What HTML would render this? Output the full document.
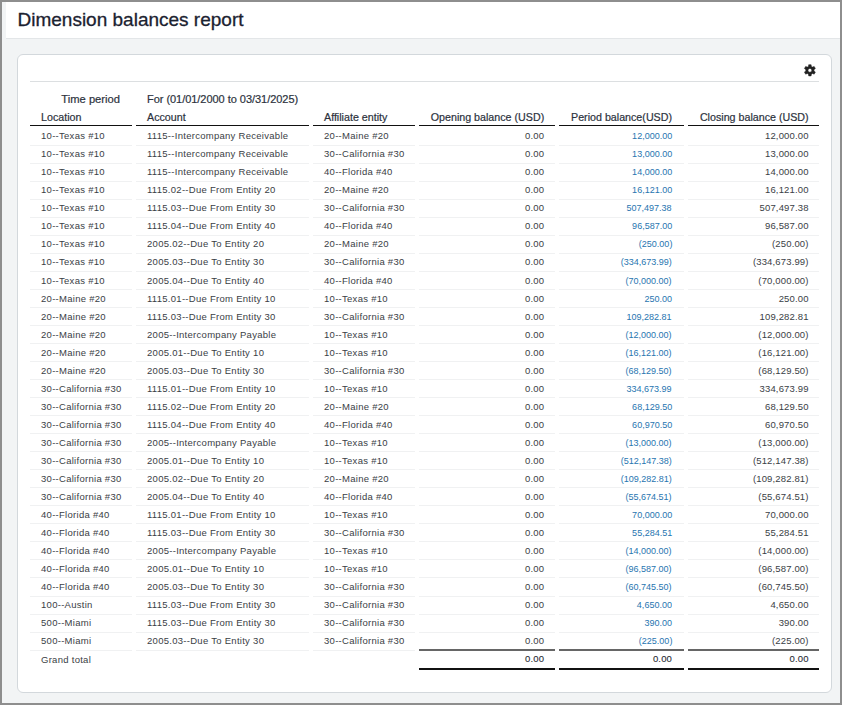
<!DOCTYPE html>
<html><head><meta charset="utf-8"><style>
*{margin:0;padding:0;box-sizing:border-box}
html,body{width:842px;height:705px;overflow:hidden}
body{background:#8e8e8e;font-family:"Liberation Sans",sans-serif;position:relative}
#frame{position:absolute;left:2px;top:2px;width:838px;height:701px;background:#f2f4f5}
#hdr{position:absolute;left:6px;top:2px;width:834px;height:37px;background:#fff;border-bottom:1px solid #e3e6e8}
#title{position:absolute;left:17.5px;top:8.5px;-webkit-text-stroke:0.3px #1b2230;font-size:19px;color:#1b2230;white-space:nowrap;line-height:22px}
#card{position:absolute;left:17px;top:54px;width:815px;height:639px;background:#fff;border:1px solid #d3d8dc;border-radius:6px}
.a{position:absolute;white-space:nowrap;line-height:12px}
.t{font-size:9.5px;color:#3a3e45;letter-spacing:0.28px}
.n{font-size:9.5px;color:#3a3e45;text-align:right;letter-spacing:0.15px;transform-origin:100% 50%}
.tot{transform:none;color:#2a2e35;-webkit-text-stroke:0.1px #2a2e35}
.b{color:#2775b0;letter-spacing:0;transform:scaleX(0.95)}
.h{font-size:10.7px;color:#2c323d;-webkit-text-stroke:0.2px #2c323d}
.ln{position:absolute;height:1px;background:#f0f1f2}
.hl{position:absolute;height:1px;background:#111}
</style></head><body>
<div id="frame"></div>
<div id="hdr"></div>
<div id="title">Dimension balances report</div>
<div id="card"></div>

<div class="ln" style="left:30px;top:81px;width:789px;background:#dcdfe1"></div>
<svg style="position:absolute;left:803px;top:63px" width="14" height="14" viewBox="0 0 14 14"><path fill="#222" stroke="#222" stroke-width="0.5" stroke-linejoin="round" fill-rule="evenodd" d="M5.43 3.47 L5.70 1.68 L8.10 1.68 L8.37 3.47 L9.48 4.11 L11.17 3.45 L12.37 5.52 L10.95 6.66 L10.95 7.94 L12.37 9.08 L11.17 11.15 L9.48 10.49 L8.37 11.13 L8.10 12.92 L5.70 12.92 L5.43 11.13 L4.32 10.49 L2.63 11.15 L1.43 9.08 L2.85 7.94 L2.85 6.66 L1.43 5.52 L2.63 3.45 L4.32 4.11Z M6.9 5.4 A1.9 1.9 0 1 0 6.9 9.2 A1.9 1.9 0 1 0 6.9 5.4Z"/></svg>
<div class="a h"  style="font-size:11.2px;right:722px;top:92.92px">Time period</div>
<div class="a h" style="font-size:11px;letter-spacing:-0.04px;left:147px;top:92.92px">For (01/01/2000 to 03/31/2025)</div>
<div class="a h" style="left:41px;top:110.79px">Location</div>
<div class="a h" style="left:147px;top:110.79px">Account</div>
<div class="a h" style="left:324px;top:110.79px">Affiliate entity</div>
<div class="a h" style="right:297.79999999999995px;top:110.79px">Opening balance (USD)</div>
<div class="a h" style="right:170px;top:110.79px">Period balance(USD)</div>
<div class="a h" style="right:33.39999999999998px;top:110.79px">Closing balance (USD)</div>
<div class="hl" style="left:30px;top:125px;width:102px"></div>
<div class="hl" style="left:136px;top:125px;width:173px"></div>
<div class="hl" style="left:313px;top:125px;width:102px"></div>
<div class="hl" style="left:419px;top:125px;width:136px"></div>
<div class="hl" style="left:559px;top:125px;width:125px"></div>
<div class="hl" style="left:688px;top:125px;width:131px"></div>
<div class="a t" style="left:41px;top:130.21px">10--Texas #10</div>
<div class="a t" style="left:147px;top:130.21px">1115--Intercompany Receivable</div>
<div class="a t" style="left:324px;top:130.21px">20--Maine #20</div>
<div class="a n" style="right:297.79999999999995px;top:130.21px">0.00</div>
<div class="a n b" style="right:170px;top:130.21px">12,000.00</div>
<div class="a n" style="right:33.39999999999998px;top:130.21px">12,000.00</div>
<div class="ln" style="left:30px;top:144.50px;width:102px"></div>
<div class="ln" style="left:136px;top:144.50px;width:173px"></div>
<div class="ln" style="left:313px;top:144.50px;width:102px"></div>
<div class="ln" style="left:419px;top:144.50px;width:136px"></div>
<div class="ln" style="left:559px;top:144.50px;width:125px"></div>
<div class="ln" style="left:688px;top:144.50px;width:131px"></div>
<div class="a t" style="left:41px;top:148.25px">10--Texas #10</div>
<div class="a t" style="left:147px;top:148.25px">1115--Intercompany Receivable</div>
<div class="a t" style="left:324px;top:148.25px">30--California #30</div>
<div class="a n" style="right:297.79999999999995px;top:148.25px">0.00</div>
<div class="a n b" style="right:170px;top:148.25px">13,000.00</div>
<div class="a n" style="right:33.39999999999998px;top:148.25px">13,000.00</div>
<div class="ln" style="left:30px;top:162.54px;width:102px"></div>
<div class="ln" style="left:136px;top:162.54px;width:173px"></div>
<div class="ln" style="left:313px;top:162.54px;width:102px"></div>
<div class="ln" style="left:419px;top:162.54px;width:136px"></div>
<div class="ln" style="left:559px;top:162.54px;width:125px"></div>
<div class="ln" style="left:688px;top:162.54px;width:131px"></div>
<div class="a t" style="left:41px;top:166.29px">10--Texas #10</div>
<div class="a t" style="left:147px;top:166.29px">1115--Intercompany Receivable</div>
<div class="a t" style="left:324px;top:166.29px">40--Florida #40</div>
<div class="a n" style="right:297.79999999999995px;top:166.29px">0.00</div>
<div class="a n b" style="right:170px;top:166.29px">14,000.00</div>
<div class="a n" style="right:33.39999999999998px;top:166.29px">14,000.00</div>
<div class="ln" style="left:30px;top:180.58px;width:102px"></div>
<div class="ln" style="left:136px;top:180.58px;width:173px"></div>
<div class="ln" style="left:313px;top:180.58px;width:102px"></div>
<div class="ln" style="left:419px;top:180.58px;width:136px"></div>
<div class="ln" style="left:559px;top:180.58px;width:125px"></div>
<div class="ln" style="left:688px;top:180.58px;width:131px"></div>
<div class="a t" style="left:41px;top:184.33px">10--Texas #10</div>
<div class="a t" style="left:147px;top:184.33px">1115.02--Due From Entity 20</div>
<div class="a t" style="left:324px;top:184.33px">20--Maine #20</div>
<div class="a n" style="right:297.79999999999995px;top:184.33px">0.00</div>
<div class="a n b" style="right:170px;top:184.33px">16,121.00</div>
<div class="a n" style="right:33.39999999999998px;top:184.33px">16,121.00</div>
<div class="ln" style="left:30px;top:198.62px;width:102px"></div>
<div class="ln" style="left:136px;top:198.62px;width:173px"></div>
<div class="ln" style="left:313px;top:198.62px;width:102px"></div>
<div class="ln" style="left:419px;top:198.62px;width:136px"></div>
<div class="ln" style="left:559px;top:198.62px;width:125px"></div>
<div class="ln" style="left:688px;top:198.62px;width:131px"></div>
<div class="a t" style="left:41px;top:202.37px">10--Texas #10</div>
<div class="a t" style="left:147px;top:202.37px">1115.03--Due From Entity 30</div>
<div class="a t" style="left:324px;top:202.37px">30--California #30</div>
<div class="a n" style="right:297.79999999999995px;top:202.37px">0.00</div>
<div class="a n b" style="right:170px;top:202.37px">507,497.38</div>
<div class="a n" style="right:33.39999999999998px;top:202.37px">507,497.38</div>
<div class="ln" style="left:30px;top:216.66px;width:102px"></div>
<div class="ln" style="left:136px;top:216.66px;width:173px"></div>
<div class="ln" style="left:313px;top:216.66px;width:102px"></div>
<div class="ln" style="left:419px;top:216.66px;width:136px"></div>
<div class="ln" style="left:559px;top:216.66px;width:125px"></div>
<div class="ln" style="left:688px;top:216.66px;width:131px"></div>
<div class="a t" style="left:41px;top:220.41px">10--Texas #10</div>
<div class="a t" style="left:147px;top:220.41px">1115.04--Due From Entity 40</div>
<div class="a t" style="left:324px;top:220.41px">40--Florida #40</div>
<div class="a n" style="right:297.79999999999995px;top:220.41px">0.00</div>
<div class="a n b" style="right:170px;top:220.41px">96,587.00</div>
<div class="a n" style="right:33.39999999999998px;top:220.41px">96,587.00</div>
<div class="ln" style="left:30px;top:234.70px;width:102px"></div>
<div class="ln" style="left:136px;top:234.70px;width:173px"></div>
<div class="ln" style="left:313px;top:234.70px;width:102px"></div>
<div class="ln" style="left:419px;top:234.70px;width:136px"></div>
<div class="ln" style="left:559px;top:234.70px;width:125px"></div>
<div class="ln" style="left:688px;top:234.70px;width:131px"></div>
<div class="a t" style="left:41px;top:238.45px">10--Texas #10</div>
<div class="a t" style="left:147px;top:238.45px">2005.02--Due To Entity 20</div>
<div class="a t" style="left:324px;top:238.45px">20--Maine #20</div>
<div class="a n" style="right:297.79999999999995px;top:238.45px">0.00</div>
<div class="a n b" style="right:170px;top:238.45px">(250.00)</div>
<div class="a n" style="right:33.39999999999998px;top:238.45px">(250.00)</div>
<div class="ln" style="left:30px;top:252.74px;width:102px"></div>
<div class="ln" style="left:136px;top:252.74px;width:173px"></div>
<div class="ln" style="left:313px;top:252.74px;width:102px"></div>
<div class="ln" style="left:419px;top:252.74px;width:136px"></div>
<div class="ln" style="left:559px;top:252.74px;width:125px"></div>
<div class="ln" style="left:688px;top:252.74px;width:131px"></div>
<div class="a t" style="left:41px;top:256.49px">10--Texas #10</div>
<div class="a t" style="left:147px;top:256.49px">2005.03--Due To Entity 30</div>
<div class="a t" style="left:324px;top:256.49px">30--California #30</div>
<div class="a n" style="right:297.79999999999995px;top:256.49px">0.00</div>
<div class="a n b" style="right:170px;top:256.49px">(334,673.99)</div>
<div class="a n" style="right:33.39999999999998px;top:256.49px">(334,673.99)</div>
<div class="ln" style="left:30px;top:270.78px;width:102px"></div>
<div class="ln" style="left:136px;top:270.78px;width:173px"></div>
<div class="ln" style="left:313px;top:270.78px;width:102px"></div>
<div class="ln" style="left:419px;top:270.78px;width:136px"></div>
<div class="ln" style="left:559px;top:270.78px;width:125px"></div>
<div class="ln" style="left:688px;top:270.78px;width:131px"></div>
<div class="a t" style="left:41px;top:274.53px">10--Texas #10</div>
<div class="a t" style="left:147px;top:274.53px">2005.04--Due To Entity 40</div>
<div class="a t" style="left:324px;top:274.53px">40--Florida #40</div>
<div class="a n" style="right:297.79999999999995px;top:274.53px">0.00</div>
<div class="a n b" style="right:170px;top:274.53px">(70,000.00)</div>
<div class="a n" style="right:33.39999999999998px;top:274.53px">(70,000.00)</div>
<div class="ln" style="left:30px;top:288.82px;width:102px"></div>
<div class="ln" style="left:136px;top:288.82px;width:173px"></div>
<div class="ln" style="left:313px;top:288.82px;width:102px"></div>
<div class="ln" style="left:419px;top:288.82px;width:136px"></div>
<div class="ln" style="left:559px;top:288.82px;width:125px"></div>
<div class="ln" style="left:688px;top:288.82px;width:131px"></div>
<div class="a t" style="left:41px;top:292.57px">20--Maine #20</div>
<div class="a t" style="left:147px;top:292.57px">1115.01--Due From Entity 10</div>
<div class="a t" style="left:324px;top:292.57px">10--Texas #10</div>
<div class="a n" style="right:297.79999999999995px;top:292.57px">0.00</div>
<div class="a n b" style="right:170px;top:292.57px">250.00</div>
<div class="a n" style="right:33.39999999999998px;top:292.57px">250.00</div>
<div class="ln" style="left:30px;top:306.86px;width:102px"></div>
<div class="ln" style="left:136px;top:306.86px;width:173px"></div>
<div class="ln" style="left:313px;top:306.86px;width:102px"></div>
<div class="ln" style="left:419px;top:306.86px;width:136px"></div>
<div class="ln" style="left:559px;top:306.86px;width:125px"></div>
<div class="ln" style="left:688px;top:306.86px;width:131px"></div>
<div class="a t" style="left:41px;top:310.61px">20--Maine #20</div>
<div class="a t" style="left:147px;top:310.61px">1115.03--Due From Entity 30</div>
<div class="a t" style="left:324px;top:310.61px">30--California #30</div>
<div class="a n" style="right:297.79999999999995px;top:310.61px">0.00</div>
<div class="a n b" style="right:170px;top:310.61px">109,282.81</div>
<div class="a n" style="right:33.39999999999998px;top:310.61px">109,282.81</div>
<div class="ln" style="left:30px;top:324.90px;width:102px"></div>
<div class="ln" style="left:136px;top:324.90px;width:173px"></div>
<div class="ln" style="left:313px;top:324.90px;width:102px"></div>
<div class="ln" style="left:419px;top:324.90px;width:136px"></div>
<div class="ln" style="left:559px;top:324.90px;width:125px"></div>
<div class="ln" style="left:688px;top:324.90px;width:131px"></div>
<div class="a t" style="left:41px;top:328.65px">20--Maine #20</div>
<div class="a t" style="left:147px;top:328.65px">2005--Intercompany Payable</div>
<div class="a t" style="left:324px;top:328.65px">10--Texas #10</div>
<div class="a n" style="right:297.79999999999995px;top:328.65px">0.00</div>
<div class="a n b" style="right:170px;top:328.65px">(12,000.00)</div>
<div class="a n" style="right:33.39999999999998px;top:328.65px">(12,000.00)</div>
<div class="ln" style="left:30px;top:342.94px;width:102px"></div>
<div class="ln" style="left:136px;top:342.94px;width:173px"></div>
<div class="ln" style="left:313px;top:342.94px;width:102px"></div>
<div class="ln" style="left:419px;top:342.94px;width:136px"></div>
<div class="ln" style="left:559px;top:342.94px;width:125px"></div>
<div class="ln" style="left:688px;top:342.94px;width:131px"></div>
<div class="a t" style="left:41px;top:346.69px">20--Maine #20</div>
<div class="a t" style="left:147px;top:346.69px">2005.01--Due To Entity 10</div>
<div class="a t" style="left:324px;top:346.69px">10--Texas #10</div>
<div class="a n" style="right:297.79999999999995px;top:346.69px">0.00</div>
<div class="a n b" style="right:170px;top:346.69px">(16,121.00)</div>
<div class="a n" style="right:33.39999999999998px;top:346.69px">(16,121.00)</div>
<div class="ln" style="left:30px;top:360.98px;width:102px"></div>
<div class="ln" style="left:136px;top:360.98px;width:173px"></div>
<div class="ln" style="left:313px;top:360.98px;width:102px"></div>
<div class="ln" style="left:419px;top:360.98px;width:136px"></div>
<div class="ln" style="left:559px;top:360.98px;width:125px"></div>
<div class="ln" style="left:688px;top:360.98px;width:131px"></div>
<div class="a t" style="left:41px;top:364.73px">20--Maine #20</div>
<div class="a t" style="left:147px;top:364.73px">2005.03--Due To Entity 30</div>
<div class="a t" style="left:324px;top:364.73px">30--California #30</div>
<div class="a n" style="right:297.79999999999995px;top:364.73px">0.00</div>
<div class="a n b" style="right:170px;top:364.73px">(68,129.50)</div>
<div class="a n" style="right:33.39999999999998px;top:364.73px">(68,129.50)</div>
<div class="ln" style="left:30px;top:379.02px;width:102px"></div>
<div class="ln" style="left:136px;top:379.02px;width:173px"></div>
<div class="ln" style="left:313px;top:379.02px;width:102px"></div>
<div class="ln" style="left:419px;top:379.02px;width:136px"></div>
<div class="ln" style="left:559px;top:379.02px;width:125px"></div>
<div class="ln" style="left:688px;top:379.02px;width:131px"></div>
<div class="a t" style="left:41px;top:382.77px">30--California #30</div>
<div class="a t" style="left:147px;top:382.77px">1115.01--Due From Entity 10</div>
<div class="a t" style="left:324px;top:382.77px">10--Texas #10</div>
<div class="a n" style="right:297.79999999999995px;top:382.77px">0.00</div>
<div class="a n b" style="right:170px;top:382.77px">334,673.99</div>
<div class="a n" style="right:33.39999999999998px;top:382.77px">334,673.99</div>
<div class="ln" style="left:30px;top:397.06px;width:102px"></div>
<div class="ln" style="left:136px;top:397.06px;width:173px"></div>
<div class="ln" style="left:313px;top:397.06px;width:102px"></div>
<div class="ln" style="left:419px;top:397.06px;width:136px"></div>
<div class="ln" style="left:559px;top:397.06px;width:125px"></div>
<div class="ln" style="left:688px;top:397.06px;width:131px"></div>
<div class="a t" style="left:41px;top:400.81px">30--California #30</div>
<div class="a t" style="left:147px;top:400.81px">1115.02--Due From Entity 20</div>
<div class="a t" style="left:324px;top:400.81px">20--Maine #20</div>
<div class="a n" style="right:297.79999999999995px;top:400.81px">0.00</div>
<div class="a n b" style="right:170px;top:400.81px">68,129.50</div>
<div class="a n" style="right:33.39999999999998px;top:400.81px">68,129.50</div>
<div class="ln" style="left:30px;top:415.10px;width:102px"></div>
<div class="ln" style="left:136px;top:415.10px;width:173px"></div>
<div class="ln" style="left:313px;top:415.10px;width:102px"></div>
<div class="ln" style="left:419px;top:415.10px;width:136px"></div>
<div class="ln" style="left:559px;top:415.10px;width:125px"></div>
<div class="ln" style="left:688px;top:415.10px;width:131px"></div>
<div class="a t" style="left:41px;top:418.85px">30--California #30</div>
<div class="a t" style="left:147px;top:418.85px">1115.04--Due From Entity 40</div>
<div class="a t" style="left:324px;top:418.85px">40--Florida #40</div>
<div class="a n" style="right:297.79999999999995px;top:418.85px">0.00</div>
<div class="a n b" style="right:170px;top:418.85px">60,970.50</div>
<div class="a n" style="right:33.39999999999998px;top:418.85px">60,970.50</div>
<div class="ln" style="left:30px;top:433.14px;width:102px"></div>
<div class="ln" style="left:136px;top:433.14px;width:173px"></div>
<div class="ln" style="left:313px;top:433.14px;width:102px"></div>
<div class="ln" style="left:419px;top:433.14px;width:136px"></div>
<div class="ln" style="left:559px;top:433.14px;width:125px"></div>
<div class="ln" style="left:688px;top:433.14px;width:131px"></div>
<div class="a t" style="left:41px;top:436.89px">30--California #30</div>
<div class="a t" style="left:147px;top:436.89px">2005--Intercompany Payable</div>
<div class="a t" style="left:324px;top:436.89px">10--Texas #10</div>
<div class="a n" style="right:297.79999999999995px;top:436.89px">0.00</div>
<div class="a n b" style="right:170px;top:436.89px">(13,000.00)</div>
<div class="a n" style="right:33.39999999999998px;top:436.89px">(13,000.00)</div>
<div class="ln" style="left:30px;top:451.18px;width:102px"></div>
<div class="ln" style="left:136px;top:451.18px;width:173px"></div>
<div class="ln" style="left:313px;top:451.18px;width:102px"></div>
<div class="ln" style="left:419px;top:451.18px;width:136px"></div>
<div class="ln" style="left:559px;top:451.18px;width:125px"></div>
<div class="ln" style="left:688px;top:451.18px;width:131px"></div>
<div class="a t" style="left:41px;top:454.93px">30--California #30</div>
<div class="a t" style="left:147px;top:454.93px">2005.01--Due To Entity 10</div>
<div class="a t" style="left:324px;top:454.93px">10--Texas #10</div>
<div class="a n" style="right:297.79999999999995px;top:454.93px">0.00</div>
<div class="a n b" style="right:170px;top:454.93px">(512,147.38)</div>
<div class="a n" style="right:33.39999999999998px;top:454.93px">(512,147.38)</div>
<div class="ln" style="left:30px;top:469.22px;width:102px"></div>
<div class="ln" style="left:136px;top:469.22px;width:173px"></div>
<div class="ln" style="left:313px;top:469.22px;width:102px"></div>
<div class="ln" style="left:419px;top:469.22px;width:136px"></div>
<div class="ln" style="left:559px;top:469.22px;width:125px"></div>
<div class="ln" style="left:688px;top:469.22px;width:131px"></div>
<div class="a t" style="left:41px;top:472.97px">30--California #30</div>
<div class="a t" style="left:147px;top:472.97px">2005.02--Due To Entity 20</div>
<div class="a t" style="left:324px;top:472.97px">20--Maine #20</div>
<div class="a n" style="right:297.79999999999995px;top:472.97px">0.00</div>
<div class="a n b" style="right:170px;top:472.97px">(109,282.81)</div>
<div class="a n" style="right:33.39999999999998px;top:472.97px">(109,282.81)</div>
<div class="ln" style="left:30px;top:487.26px;width:102px"></div>
<div class="ln" style="left:136px;top:487.26px;width:173px"></div>
<div class="ln" style="left:313px;top:487.26px;width:102px"></div>
<div class="ln" style="left:419px;top:487.26px;width:136px"></div>
<div class="ln" style="left:559px;top:487.26px;width:125px"></div>
<div class="ln" style="left:688px;top:487.26px;width:131px"></div>
<div class="a t" style="left:41px;top:491.01px">30--California #30</div>
<div class="a t" style="left:147px;top:491.01px">2005.04--Due To Entity 40</div>
<div class="a t" style="left:324px;top:491.01px">40--Florida #40</div>
<div class="a n" style="right:297.79999999999995px;top:491.01px">0.00</div>
<div class="a n b" style="right:170px;top:491.01px">(55,674.51)</div>
<div class="a n" style="right:33.39999999999998px;top:491.01px">(55,674.51)</div>
<div class="ln" style="left:30px;top:505.30px;width:102px"></div>
<div class="ln" style="left:136px;top:505.30px;width:173px"></div>
<div class="ln" style="left:313px;top:505.30px;width:102px"></div>
<div class="ln" style="left:419px;top:505.30px;width:136px"></div>
<div class="ln" style="left:559px;top:505.30px;width:125px"></div>
<div class="ln" style="left:688px;top:505.30px;width:131px"></div>
<div class="a t" style="left:41px;top:509.05px">40--Florida #40</div>
<div class="a t" style="left:147px;top:509.05px">1115.01--Due From Entity 10</div>
<div class="a t" style="left:324px;top:509.05px">10--Texas #10</div>
<div class="a n" style="right:297.79999999999995px;top:509.05px">0.00</div>
<div class="a n b" style="right:170px;top:509.05px">70,000.00</div>
<div class="a n" style="right:33.39999999999998px;top:509.05px">70,000.00</div>
<div class="ln" style="left:30px;top:523.34px;width:102px"></div>
<div class="ln" style="left:136px;top:523.34px;width:173px"></div>
<div class="ln" style="left:313px;top:523.34px;width:102px"></div>
<div class="ln" style="left:419px;top:523.34px;width:136px"></div>
<div class="ln" style="left:559px;top:523.34px;width:125px"></div>
<div class="ln" style="left:688px;top:523.34px;width:131px"></div>
<div class="a t" style="left:41px;top:527.09px">40--Florida #40</div>
<div class="a t" style="left:147px;top:527.09px">1115.03--Due From Entity 30</div>
<div class="a t" style="left:324px;top:527.09px">30--California #30</div>
<div class="a n" style="right:297.79999999999995px;top:527.09px">0.00</div>
<div class="a n b" style="right:170px;top:527.09px">55,284.51</div>
<div class="a n" style="right:33.39999999999998px;top:527.09px">55,284.51</div>
<div class="ln" style="left:30px;top:541.38px;width:102px"></div>
<div class="ln" style="left:136px;top:541.38px;width:173px"></div>
<div class="ln" style="left:313px;top:541.38px;width:102px"></div>
<div class="ln" style="left:419px;top:541.38px;width:136px"></div>
<div class="ln" style="left:559px;top:541.38px;width:125px"></div>
<div class="ln" style="left:688px;top:541.38px;width:131px"></div>
<div class="a t" style="left:41px;top:545.13px">40--Florida #40</div>
<div class="a t" style="left:147px;top:545.13px">2005--Intercompany Payable</div>
<div class="a t" style="left:324px;top:545.13px">10--Texas #10</div>
<div class="a n" style="right:297.79999999999995px;top:545.13px">0.00</div>
<div class="a n b" style="right:170px;top:545.13px">(14,000.00)</div>
<div class="a n" style="right:33.39999999999998px;top:545.13px">(14,000.00)</div>
<div class="ln" style="left:30px;top:559.42px;width:102px"></div>
<div class="ln" style="left:136px;top:559.42px;width:173px"></div>
<div class="ln" style="left:313px;top:559.42px;width:102px"></div>
<div class="ln" style="left:419px;top:559.42px;width:136px"></div>
<div class="ln" style="left:559px;top:559.42px;width:125px"></div>
<div class="ln" style="left:688px;top:559.42px;width:131px"></div>
<div class="a t" style="left:41px;top:563.17px">40--Florida #40</div>
<div class="a t" style="left:147px;top:563.17px">2005.01--Due To Entity 10</div>
<div class="a t" style="left:324px;top:563.17px">10--Texas #10</div>
<div class="a n" style="right:297.79999999999995px;top:563.17px">0.00</div>
<div class="a n b" style="right:170px;top:563.17px">(96,587.00)</div>
<div class="a n" style="right:33.39999999999998px;top:563.17px">(96,587.00)</div>
<div class="ln" style="left:30px;top:577.46px;width:102px"></div>
<div class="ln" style="left:136px;top:577.46px;width:173px"></div>
<div class="ln" style="left:313px;top:577.46px;width:102px"></div>
<div class="ln" style="left:419px;top:577.46px;width:136px"></div>
<div class="ln" style="left:559px;top:577.46px;width:125px"></div>
<div class="ln" style="left:688px;top:577.46px;width:131px"></div>
<div class="a t" style="left:41px;top:581.21px">40--Florida #40</div>
<div class="a t" style="left:147px;top:581.21px">2005.03--Due To Entity 30</div>
<div class="a t" style="left:324px;top:581.21px">30--California #30</div>
<div class="a n" style="right:297.79999999999995px;top:581.21px">0.00</div>
<div class="a n b" style="right:170px;top:581.21px">(60,745.50)</div>
<div class="a n" style="right:33.39999999999998px;top:581.21px">(60,745.50)</div>
<div class="ln" style="left:30px;top:595.50px;width:102px"></div>
<div class="ln" style="left:136px;top:595.50px;width:173px"></div>
<div class="ln" style="left:313px;top:595.50px;width:102px"></div>
<div class="ln" style="left:419px;top:595.50px;width:136px"></div>
<div class="ln" style="left:559px;top:595.50px;width:125px"></div>
<div class="ln" style="left:688px;top:595.50px;width:131px"></div>
<div class="a t" style="left:41px;top:599.25px">100--Austin</div>
<div class="a t" style="left:147px;top:599.25px">1115.03--Due From Entity 30</div>
<div class="a t" style="left:324px;top:599.25px">30--California #30</div>
<div class="a n" style="right:297.79999999999995px;top:599.25px">0.00</div>
<div class="a n b" style="right:170px;top:599.25px">4,650.00</div>
<div class="a n" style="right:33.39999999999998px;top:599.25px">4,650.00</div>
<div class="ln" style="left:30px;top:613.54px;width:102px"></div>
<div class="ln" style="left:136px;top:613.54px;width:173px"></div>
<div class="ln" style="left:313px;top:613.54px;width:102px"></div>
<div class="ln" style="left:419px;top:613.54px;width:136px"></div>
<div class="ln" style="left:559px;top:613.54px;width:125px"></div>
<div class="ln" style="left:688px;top:613.54px;width:131px"></div>
<div class="a t" style="left:41px;top:617.29px">500--Miami</div>
<div class="a t" style="left:147px;top:617.29px">1115.03--Due From Entity 30</div>
<div class="a t" style="left:324px;top:617.29px">30--California #30</div>
<div class="a n" style="right:297.79999999999995px;top:617.29px">0.00</div>
<div class="a n b" style="right:170px;top:617.29px">390.00</div>
<div class="a n" style="right:33.39999999999998px;top:617.29px">390.00</div>
<div class="ln" style="left:30px;top:631.58px;width:102px"></div>
<div class="ln" style="left:136px;top:631.58px;width:173px"></div>
<div class="ln" style="left:313px;top:631.58px;width:102px"></div>
<div class="ln" style="left:419px;top:631.58px;width:136px"></div>
<div class="ln" style="left:559px;top:631.58px;width:125px"></div>
<div class="ln" style="left:688px;top:631.58px;width:131px"></div>
<div class="a t" style="left:41px;top:635.33px">500--Miami</div>
<div class="a t" style="left:147px;top:635.33px">2005.03--Due To Entity 30</div>
<div class="a t" style="left:324px;top:635.33px">30--California #30</div>
<div class="a n" style="right:297.79999999999995px;top:635.33px">0.00</div>
<div class="a n b" style="right:170px;top:635.33px">(225.00)</div>
<div class="a n" style="right:33.39999999999998px;top:635.33px">(225.00)</div>
<div class="ln" style="left:30px;top:649.62px;width:102px"></div>
<div class="ln" style="left:136px;top:649.62px;width:173px"></div>
<div class="ln" style="left:313px;top:649.62px;width:102px"></div>
<div class="ln" style="left:419px;top:649.62px;width:136px"></div>
<div class="ln" style="left:559px;top:649.62px;width:125px"></div>
<div class="ln" style="left:688px;top:649.62px;width:131px"></div>
<div class="a t" style2="" style="left:41px;top:653.97px">Grand total</div>
<div class="a n tot" style="right:297.79999999999995px;top:653.07px">0.00</div>
<div class="a n tot" style="right:170px;top:653.07px">0.00</div>
<div class="a n tot" style="right:33.39999999999998px;top:653.07px">0.00</div>
<div class="hl" style="left:419px;top:649px;width:136px;height:2px;background:#666"></div>
<div class="hl" style="left:419px;top:668px;width:136px;height:2px;background:#111"></div>
<div class="hl" style="left:559px;top:649px;width:125px;height:2px;background:#666"></div>
<div class="hl" style="left:559px;top:668px;width:125px;height:2px;background:#111"></div>
<div class="hl" style="left:688px;top:649px;width:131px;height:2px;background:#666"></div>
<div class="hl" style="left:688px;top:668px;width:131px;height:2px;background:#111"></div>
</body></html>
